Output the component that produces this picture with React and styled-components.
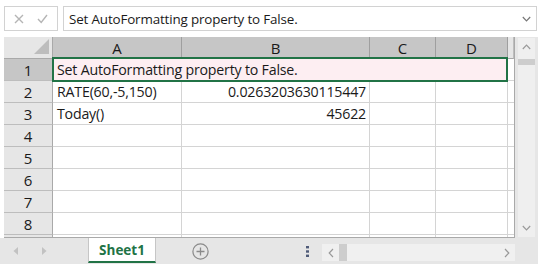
import React from 'react';
import styled, { createGlobalStyle } from 'styled-components';

const GlobalStyle = createGlobalStyle`
  html, body { margin: 0; padding: 0; background: #ffffff; }
  body { font-family: "Open Sans", "Noto Sans", sans-serif; color: #222; }
  * { box-sizing: border-box; }
`;

const Page = styled.div`
  width: 538px;
  height: 264px;
  display: flex;
  flex-direction: column;
  overflow: hidden;
  background: #ffffff;
`;

const FormulaBar = styled.div`
  height: 37px;
  padding: 6px 1px 6px 4px;
  display: flex;
  gap: 5px;
`;

const ActionBox = styled.div`
  width: 54px;
  height: 25px;
  border: 1px solid #d2d2d2;
  display: flex;
  align-items: center;
  justify-content: space-between;
  padding: 0 9px 0 9px;
`;

const FormulaInput = styled.div`
  flex: 1;
  height: 25px;
  border: 1px solid #d2d2d2;
  display: flex;
  align-items: center;
  justify-content: space-between;
  padding: 0 5px 0 5px;
  font-size: 13.4px;
  letter-spacing: -0.15px;
  color: #1a1a1a;
`;

const Main = styled.div`
  display: flex;
  height: 201px;
  padding-left: 4px;
`;

const GridWrap = styled.div`
  position: relative;
  width: 511px;
  height: 201px;
  overflow: hidden;
  border-right: 1px solid #a9a9a9;
  border-bottom: 1px solid #a9a9a9;
`;

const Grid = styled.div`
  display: grid;
  grid-template-columns: 49px 129px 188px 66px 72px 6px;
  grid-template-rows: 22px repeat(9, 22px);
`;

const Corner = styled.div`
  position: relative;
  background: #e6e6e6;
  border-right: 1px solid #a9a9a9;
  border-bottom: 1px solid #a9a9a9;
`;

const CornerTriangle = styled.div`
  position: absolute;
  right: 3px;
  bottom: 4px;
  width: 0;
  height: 0;
  border-left: 15px solid transparent;
  border-bottom: 15px solid #bdbdbd;
`;

const ColHeader = styled.div`
  background: ${p => (p.$active ? '#c6c6c6' : '#e6e6e6')};
  border-right: 1px solid ${p => (p.$active ? '#9f9f9f' : '#bdbdbd')};
  border-bottom: 1px solid #a9a9a9;
  display: flex;
  align-items: center;
  justify-content: center;
  font-size: 15px;
  color: #1a1a1a;
  padding-top: 1px;
`;

const RowHeader = styled.div`
  background: ${p => (p.$active ? '#c6c6c6' : '#e6e6e6')};
  border-right: 1px solid #a9a9a9;
  border-bottom: 1px solid #bdbdbd;
  display: flex;
  align-items: center;
  justify-content: center;
  font-size: 15px;
  color: #1a1a1a;
`;

const Cell = styled.div`
  grid-column: span ${p => p.$span || 1};
  background: ${p => (p.$selected ? '#fdeef2' : '#ffffff')};
  border-right: 1px solid #d4d4d4;
  border-bottom: 1px solid #d4d4d4;
  display: flex;
  align-items: center;
  justify-content: ${p => (p.$align === 'right' ? 'flex-end' : 'flex-start')};
  padding: 0 3px 0 4px;
  font-size: 14.2px;
  letter-spacing: -0.2px;
  color: #1a1a1a;
  white-space: nowrap;
  overflow: visible;
`;

const Selection = styled.div`
  position: absolute;
  left: 48px;
  top: 20px;
  width: 456px;
  height: 25px;
  border: 2px solid #217346;
  pointer-events: none;
`;

const VScroll = styled.div`
  width: 23px;
  height: 201px;
  background: #e6e6e6;
  padding: 1px 3px 1px 3px;
  display: flex;
`;

const VTrack = styled.div`
  flex: 1;
  background: #efefef;
  display: flex;
  flex-direction: column;
  align-items: stretch;
`;

const ArrowBtn = styled.div`
  height: ${p => p.$h || 16}px;
  display: flex;
  align-items: center;
  justify-content: center;
`;

const VThumb = styled.div`
  height: 6px;
  margin-top: 3px;
  background: #cdcdcd;
`;

const Spacer = styled.div`
  flex: 1;
`;

const TabBar = styled.div`
  height: 26px;
  background: #e6e6e6;
  display: flex;
  align-items: stretch;
  padding-left: 4px;
`;

const NavArrows = styled.div`
  width: 84px;
  display: flex;
  align-items: center;
  padding-left: 9px;
  gap: 24px;
`;

const Tab = styled.div`
  width: 68px;
  height: 25px;
  background: #ffffff;
  border-left: 1px solid #c6c6c6;
  border-right: 1px solid #c6c6c6;
  border-bottom: 2px solid #217346;
  display: flex;
  align-items: center;
  justify-content: center;
  font-size: 13.5px;
  font-weight: 700;
  color: #217346;
  padding-top: 1px;
`;

const AddBtn = styled.div`
  width: 90px;
  display: flex;
  align-items: center;
  justify-content: center;
  padding-right: 1px;
`;

const Dots = styled.div`
  width: 76px;
  display: flex;
  align-items: center;
  justify-content: flex-end;
  padding-right: 13px;
`;

const HScroll = styled.div`
  width: 193px;
  height: 17px;
  margin-top: 6px;
  background: #f0f0f0;
  display: flex;
  align-items: center;
`;

const HThumb = styled.div`
  width: 8px;
  height: 17px;
  background: #cdcdcd;
`;

const HArrow = styled.div`
  width: 17px;
  height: 17px;
  display: flex;
  align-items: center;
  justify-content: center;
`;

const XIcon = () => (
  <svg width="10" height="10" viewBox="0 0 10 10">
    <path d="M1 1 L9 9 M9 1 L1 9" stroke="#b5b5b5" strokeWidth="1.4" fill="none" />
  </svg>
);

const CheckIcon = () => (
  <svg width="11" height="10" viewBox="0 0 11 10">
    <path d="M1 5 L4.2 8.5 L10 1" stroke="#b5b5b5" strokeWidth="1.4" fill="none" />
  </svg>
);

const ChevronDown = ({ color = '#777', w = 9 }) => (
  <svg width={w} height="6" viewBox="0 0 9 6">
    <path d="M0.8 1 L4.5 4.8 L8.2 1" stroke={color} strokeWidth="1.2" fill="none" />
  </svg>
);

const ChevronUp = ({ color = '#9a9a9a' }) => (
  <svg width="9" height="6" viewBox="0 0 9 6">
    <path d="M0.8 5 L4.5 1.2 L8.2 5" stroke={color} strokeWidth="1.2" fill="none" />
  </svg>
);

const ChevronLeft = ({ color = '#999' }) => (
  <svg width="6" height="10" viewBox="0 0 6 10">
    <path d="M5 1 L1.2 5 L5 9" stroke={color} strokeWidth="1.2" fill="none" />
  </svg>
);

const ChevronRight = ({ color = '#999' }) => (
  <svg width="6" height="10" viewBox="0 0 6 10">
    <path d="M1 1 L4.8 5 L1 9" stroke={color} strokeWidth="1.2" fill="none" />
  </svg>
);

const TriLeft = () => (
  <svg width="5" height="8" viewBox="0 0 5 8">
    <path d="M5 0 L0.5 4 L5 8 Z" fill="#c2c2c2" />
  </svg>
);

const TriRight = () => (
  <svg width="5" height="8" viewBox="0 0 5 8">
    <path d="M0 0 L4.5 4 L0 8 Z" fill="#c2c2c2" />
  </svg>
);

const PlusCircle = () => (
  <svg width="17" height="17" viewBox="0 0 17 17">
    <circle cx="8.5" cy="8.5" r="7.6" stroke="#8a8a8a" strokeWidth="1.2" fill="none" />
    <path d="M8.5 4.5 V12.5 M4.5 8.5 H12.5" stroke="#8a8a8a" strokeWidth="1.3" />
  </svg>
);

const VDots = () => (
  <svg width="3" height="11" viewBox="0 0 3 11">
    <rect x="0" y="0" width="3" height="2.4" fill="#4f5b78" />
    <rect x="0" y="4.3" width="3" height="2.4" fill="#4f5b78" />
    <rect x="0" y="8.6" width="3" height="2.4" fill="#4f5b78" />
  </svg>
);

const columns = ['A', 'B', 'C', 'D', ''];
const rows = [
  { n: 1, span: true, a: 'Set AutoFormatting property to False.' },
  { n: 2, a: 'RATE(60,-5,150)', b: '0.0263203630115447' },
  { n: 3, a: 'Today()', b: '45622' },
  { n: 4 },
  { n: 5 },
  { n: 6 },
  { n: 7 },
  { n: 8 },
  { n: '' },
];

export default function App() {
  return (
    <Page>
      <GlobalStyle />
      <FormulaBar>
        <ActionBox>
          <XIcon />
          <CheckIcon />
        </ActionBox>
        <FormulaInput>
          <span>Set AutoFormatting property to False.</span>
          <ChevronDown />
        </FormulaInput>
      </FormulaBar>
      <Main>
        <GridWrap>
          <Grid>
            <Corner>
              <CornerTriangle />
            </Corner>
            {columns.map((c, i) => (
              <ColHeader key={i} $active={c !== ''}>{c}</ColHeader>
            ))}
            {rows.map((r, ri) => (
              <React.Fragment key={ri}>
                <RowHeader $active={r.n === 1}>{r.n}</RowHeader>
                {r.span ? (
                  <>
                    <Cell $span={4} $selected>{r.a}</Cell>
                    <Cell />
                  </>
                ) : (
                  <>
                    <Cell>{r.a}</Cell>
                    <Cell $align="right">{r.b}</Cell>
                    <Cell />
                    <Cell />
                    <Cell />
                  </>
                )}
              </React.Fragment>
            ))}
          </Grid>
          <Selection />
        </GridWrap>
        <VScroll>
          <VTrack>
            <ArrowBtn $h={18}><ChevronUp /></ArrowBtn>
            <VThumb />
            <Spacer />
            <ArrowBtn $h={18}><ChevronDown color="#9a9a9a" /></ArrowBtn>
          </VTrack>
        </VScroll>
      </Main>
      <TabBar>
        <NavArrows>
          <TriLeft />
          <TriRight />
        </NavArrows>
        <Tab>Sheet1</Tab>
        <AddBtn><PlusCircle /></AddBtn>
        <Dots><VDots /></Dots>
        <HScroll>
          <HArrow><ChevronLeft /></HArrow>
          <HThumb />
          <Spacer />
          <HArrow><ChevronRight /></HArrow>
        </HScroll>
      </TabBar>
    </Page>
  );
}
